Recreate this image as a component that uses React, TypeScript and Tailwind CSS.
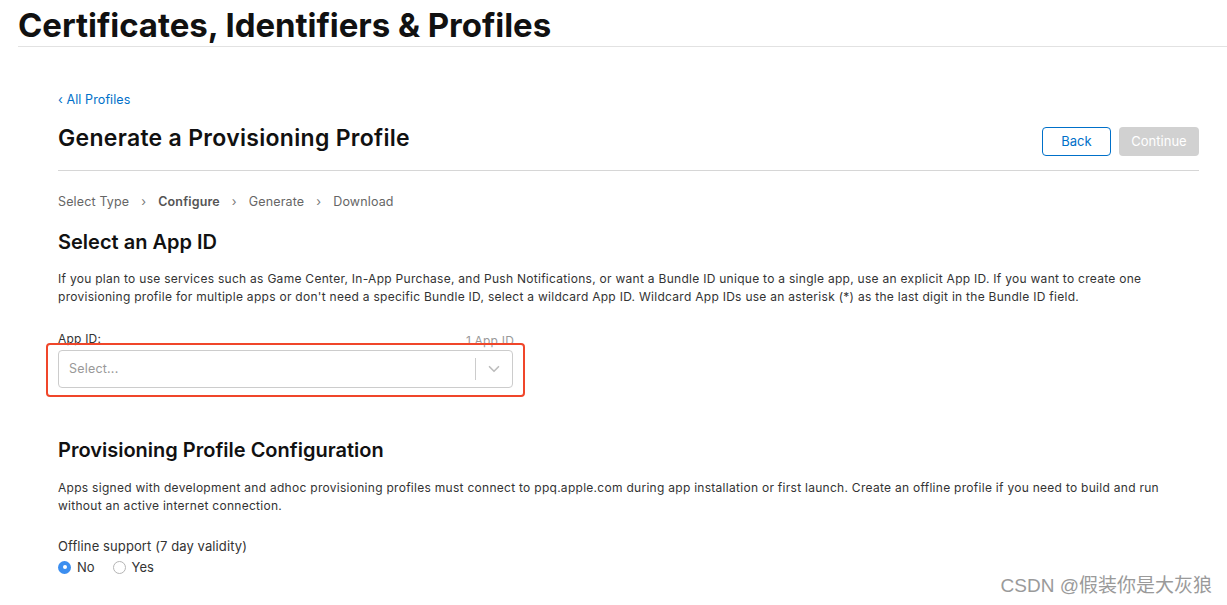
import { ChevronDown } from "lucide-react";

const STEPS = ["Select Type", "Configure", "Generate", "Download"];

function Radio({ label, checked }: { label: string; checked?: boolean }) {
  return (
    <label className="flex items-center gap-[6px]">
      {checked ? (
        <span className="w-[13px] h-[13px] rounded-full bg-[#3b8ef0] flex items-center justify-center">
          <span className="w-[4px] h-[4px] rounded-full bg-white" />
        </span>
      ) : (
        <span className="w-[13px] h-[13px] rounded-full border border-[#b5b5b5] bg-white" />
      )}
      <span>{label}</span>
    </label>
  );
}

export default function App() {
  return (
    <div className="relative w-[1227px] h-[605px] bg-white overflow-hidden text-[#333] font-['Inter','Noto_Sans_CJK_SC',sans-serif]">
      <div className="ml-[18px] h-[47px] border-b border-[#e2e2e2]">
        <h1 className="pt-[6px] text-[33px] leading-[38px] font-bold tracking-[-0.05px] text-[#111]">
          Certificates, Identifiers &amp; Profiles
        </h1>
      </div>

      <div className="pl-[58px] pr-[28px]">
        <a className="block mt-[45px] text-[12.5px] leading-[16px] tracking-[0.1px] text-[#0070c9]">‹ All Profiles</a>

        <div className="flex justify-between items-start pb-[14px] border-b border-[#d6d6d6]">
          <h2 className="mt-[16px] text-[23px] leading-[28px] font-semibold tracking-[0.3px] text-[#111]">
            Generate a Provisioning Profile
          </h2>
          <div className="flex gap-[8px] mt-[19px]">
            <button className="w-[69px] h-[29px] rounded-[4px] border border-[#0070c9] text-[#0070c9] text-[13px]">
              Back
            </button>
            <button className="w-[80px] h-[29px] rounded-[4px] bg-[#d1d1d1] text-white text-[13px]">
              Continue
            </button>
          </div>
        </div>

        <div className="mt-[23px] flex items-center text-[12.5px] leading-[16px] tracking-[0.15px] text-[#666]">
          {STEPS.map((s, i) => (
            <span key={s} className="flex items-center">
              {i > 0 && <span className="mx-[12px] text-[#777]">›</span>}
              <span className={s === "Configure" ? "font-semibold text-[#555]" : ""}>{s}</span>
            </span>
          ))}
        </div>

        <h3 className="mt-[20px] text-[20px] leading-[24px] font-semibold text-[#111]">Select an App ID</h3>
        <p className="mt-[16px] text-[12px] leading-[18px] tracking-[0.28px] text-[#333]">
          If you plan to use services such as Game Center, In-App Purchase, and Push Notifications, or want a Bundle ID unique to a single app, use an explicit App ID. If you want to create one
          <br />
          provisioning profile for multiple apps or don't need a specific Bundle ID, select a wildcard App ID. Wildcard App IDs use an asterisk (*) as the last digit in the Bundle ID field.
        </p>

        <div className="mt-[25px] w-[456px] flex justify-between text-[12px] leading-[16px] tracking-[0.2px]">
          <span className="text-[#333]">App ID:</span>
          <span className="translate-y-[2px] text-[#999]">1 App ID</span>
        </div>
        <div className="relative mt-[3px] w-[455px]">
          <div className="h-[38px] rounded-[4px] border border-[#cccccc] bg-white flex items-center">
            <span className="flex-1 pl-[10px] text-[12.5px] tracking-[0.2px] text-[#999]">Select...</span>
            <span className="w-px h-[22px] bg-[#cccccc]" />
            <span className="w-[36px] flex justify-center text-[#bdbdbd]">
              <ChevronDown size={18} strokeWidth={2.2} />
            </span>
          </div>
          <div className="absolute -left-[12px] -right-[12px] -top-[7px] -bottom-[9px] border-2 border-[#f0462a] rounded-[4px]" />
        </div>

        <h3 className="mt-[50px] text-[20px] leading-[24px] font-semibold text-[#111]">
          Provisioning Profile Configuration
        </h3>
        <p className="mt-[17px] text-[12px] leading-[18px] tracking-[0.28px] text-[#333]">
          Apps signed with development and adhoc provisioning profiles must connect to ppq.apple.com during app installation or first launch. Create an offline profile if you need to build and run
          <br />
          without an active internet connection.
        </p>

        <div className="mt-[23px] text-[13px] leading-[16px] tracking-[0.1px] text-[#333]">Offline support (7 day validity)</div>
        <div className="mt-[5px] flex items-center gap-[18px] text-[13px] leading-[16px] text-[#333]">
          <Radio label="No" checked />
          <Radio label="Yes" />
        </div>
      </div>

      <div className="absolute right-[15px] bottom-[8px] text-[19px] leading-[22px] text-[#9a9a9a] font-['Liberation_Sans','Noto_Sans_CJK_SC',sans-serif]">
        CSDN @假装你是大灰狼
      </div>
    </div>
  );
}
